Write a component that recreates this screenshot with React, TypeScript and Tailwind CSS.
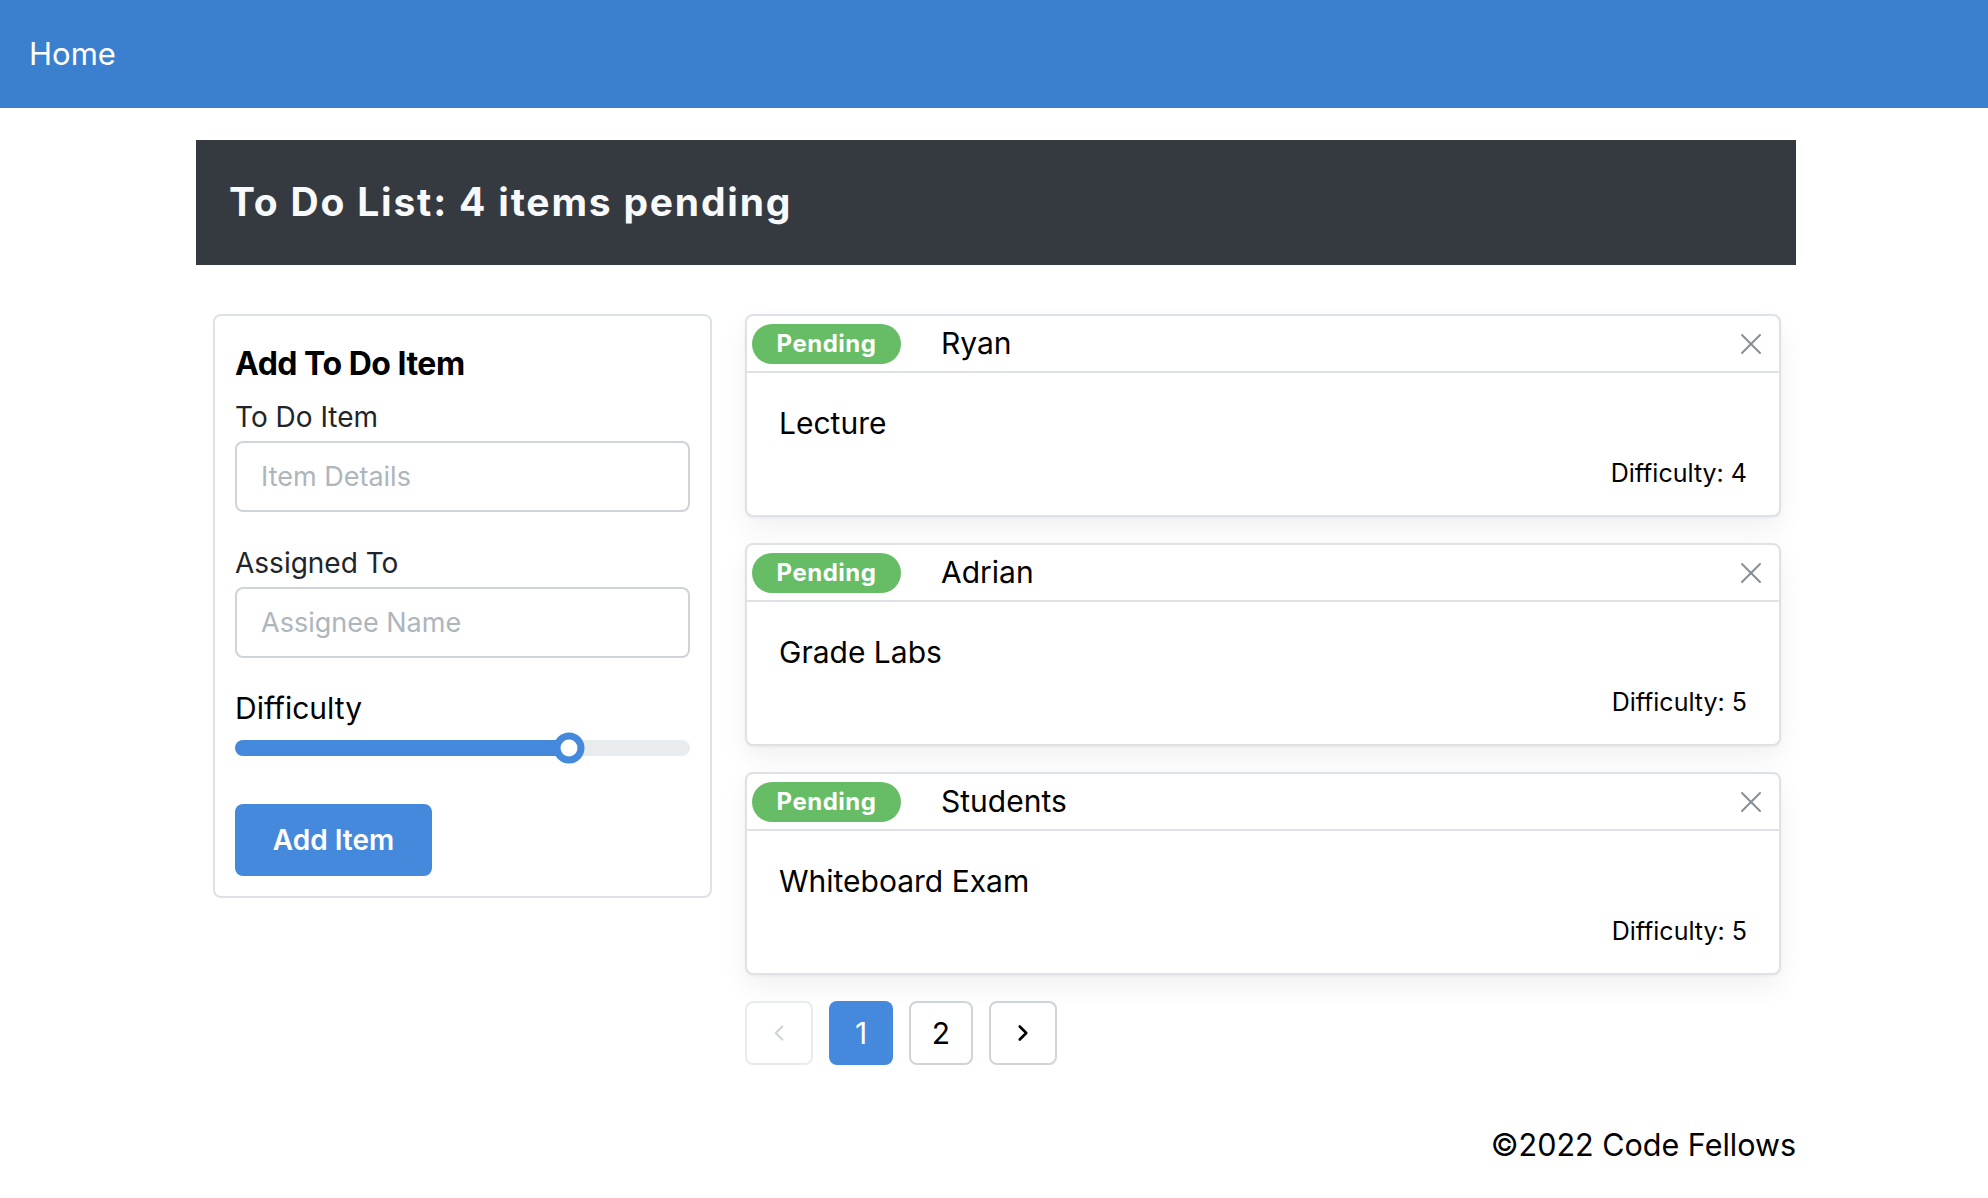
import { X, ChevronLeft, ChevronRight } from "lucide-react";

const todos = [
  { id: 1, assignee: "Ryan", text: "Lecture", difficulty: 4 },
  { id: 2, assignee: "Adrian", text: "Grade Labs", difficulty: 5 },
  { id: 3, assignee: "Students", text: "Whiteboard Exam", difficulty: 5 },
];

function TodoCard({ assignee, text, difficulty }: { assignee: string; text: string; difficulty: number }) {
  return (
    <div className="bg-white border-2 border-[#dee2e6] rounded-[8px] shadow-[0_1px_3px_rgba(0,0,0,0.05),0_12px_28px_rgba(0,0,0,0.06)]">
      <div className="h-[57px] flex items-center pl-[5px] pr-[10px] border-b-2 border-[#dee2e6]">
        <span className="h-[40px] w-[149px] flex items-center justify-center rounded-full bg-[#67bd66] text-white text-[24px] font-bold tracking-[0.5px]">
          Pending
        </span>
        <span className="ml-[40px] text-[30px] text-black">{assignee}</span>
        <button className="ml-auto text-[#868e96]">
          <X size={36} strokeWidth={1.3} />
        </button>
      </div>
      <div className="pt-[30px] pb-[26px] pl-[32px] pr-[32px]">
        <div className="text-[30px] leading-[40px] text-black">{text}</div>
        <div className="mt-[14px] text-[25px] leading-[32px] text-black text-right">
          Difficulty: {difficulty}
        </div>
      </div>
    </div>
  );
}

export default function App() {
  return (
    <div className="min-h-screen bg-white font-['Inter',_'Noto_Sans',_sans-serif] text-[#212529]">
      <header className="h-[108px] bg-[#3b7fcf] flex items-center px-[29px]">
        <span className="text-[31px] text-white">Home</span>
      </header>

      <main className="w-[1600px] ml-[196px] mt-[32px]">
        <div className="h-[125px] bg-[#343a40] flex items-center pl-[33px]">
          <h1 className="text-[39px] font-bold tracking-[1.8px] text-[#f8f9fa]">To Do List: 4 items pending</h1>
        </div>

        <div className="flex items-start gap-[33px] mt-[49px] pl-[17px] pr-[15px]">
          <form
            className="w-[499px] border-2 border-[#dee2e6] rounded-[8px] p-[20px] flex flex-col"
            onSubmit={(e) => e.preventDefault()}
          >
            <h2 className="text-[32px] leading-[56px] font-bold tracking-[-0.5px] text-black">Add To Do Item</h2>
            <label className="mt-[7px] text-[28px] leading-[36px]">To Do Item</label>
            <input
              className="mt-[6px] h-[71px] border-2 border-[#ced4da] rounded-[8px] px-[24px] text-[27px] placeholder:text-[#adb5bd] outline-none"
              placeholder="Item Details"
            />
            <label className="mt-[33px] text-[28px] leading-[36px]">Assigned To</label>
            <input
              className="mt-[6px] h-[71px] border-2 border-[#ced4da] rounded-[8px] px-[24px] text-[27px] placeholder:text-[#adb5bd] outline-none"
              placeholder="Assignee Name"
            />
            <label className="mt-[30px] text-[30px] leading-[40px] text-black">Difficulty</label>
            <div className="mt-[4px] h-[32px] flex items-center">
              <div className="relative w-full h-[16px] rounded-full bg-[#e9ecef]">
                <div className="h-full w-[73.5%] rounded-full bg-[#4589dd]" />
                <div className="absolute top-1/2 left-[73.5%] -translate-x-1/2 -translate-y-1/2 w-[31px] h-[31px] rounded-full bg-white border-[7px] border-[#4589dd]" />
              </div>
            </div>
            <button className="mt-[40px] w-[197px] h-[72px] rounded-[8px] bg-[#4589dd] text-white text-[28px] font-semibold">
              Add Item
            </button>
          </form>

          <div className="flex-1 flex flex-col gap-[26px]">
            {todos.map((t) => (
              <TodoCard key={t.id} assignee={t.assignee} text={t.text} difficulty={t.difficulty} />
            ))}
            <div className="flex gap-[16px]">
              <button className="w-[68px] h-[64px] flex items-center justify-center border-2 border-[#e9ecef] rounded-[8px] text-[#ced4da]">
                <ChevronLeft size={26} strokeWidth={2} />
              </button>
              <button className="w-[64px] h-[64px] flex items-center justify-center rounded-[8px] bg-[#4589dd] text-white text-[30px]">
                1
              </button>
              <button className="w-[64px] h-[64px] flex items-center justify-center border-2 border-[#ced4da] rounded-[8px] text-black text-[30px]">
                2
              </button>
              <button className="w-[68px] h-[64px] flex items-center justify-center border-2 border-[#ced4da] rounded-[8px] text-black">
                <ChevronRight size={26} strokeWidth={2.4} />
              </button>
            </div>
          </div>
        </div>

        <footer className="mt-[60px] text-right text-[30.5px] leading-[40px] text-black">©2022 Code Fellows</footer>
      </main>
    </div>
  );
}
